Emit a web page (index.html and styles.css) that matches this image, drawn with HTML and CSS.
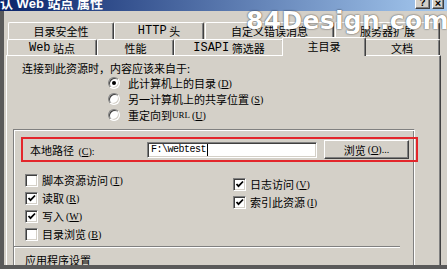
FILE: index.html
```html
<!DOCTYPE html>
<html lang="zh-CN">
<head>
<meta charset="utf-8">
<title>默认 Web 站点 属性</title>
<link rel="stylesheet" href="styles.css">
</head>
<body>
<div class="window">
  <div class="titlebar">
    <span class="title">默认 Web 站点 属性</span>
    <div class="tbtns">
      <span class="tbtn">?</span>
      <span class="tbtn x">×</span>
    </div>
  </div>
  <div class="frame">
    <div class="tabrow row1">
      <div class="tab w1">目录安全性</div>
      <div class="tab w2"><span class="en">HTTP</span>&nbsp;头</div>
      <div class="tab w3">自定义错误消息</div>
      <div class="tab w4">服务器扩展</div>
    </div>
    <div class="tabrow row2">
      <div class="tab v1"><span class="en">Web</span>&nbsp;站点</div>
      <div class="tab v2">性能</div>
      <div class="tab v3"><span class="en">ISAPI</span>&nbsp;筛选器</div>
      <div class="tab v4 active">主目录</div>
      <div class="tab v5">文档</div>
    </div>
    <div class="panel">
      <div class="heading">连接到此资源时，内容应该来自于:</div>
      <div class="radios">
        <div class="opt"><span class="radio on"></span>此计算机上的目录 <span class="mn">(<u>D</u>)</span></div>
        <div class="opt"><span class="radio"></span>另一计算机上的共享位置 <span class="mn">(<u>S</u>)</span></div>
        <div class="opt"><span class="radio"></span>重定向到 <span class="mn url">URL</span> <span class="mn">(<u>U</u>)</span></div>
      </div>
      <div class="group">
        <div class="pathrow">
          <span class="label">本地路径 <span class="mn">(<u>C</u>):</span></span>
          <div class="field"><span class="val">F:\webtest</span><span class="caret"></span></div>
          <div class="btn">浏览 <span class="mn">(<u>O</u>)...</span></div>
        </div>
        <div class="checks">
          <div class="col left">
            <div class="chk"><span class="box"></span>脚本资源访问 <span class="mn">(<u>T</u>)</span></div>
            <div class="chk"><span class="box"><svg viewBox="0 0 9 9" width="9" height="9"><path d="M1.5 4 L3.5 6.2 L8 1.5" stroke="#000" stroke-width="1.8" fill="none"/></svg></span>读取 <span class="mn">(<u>R</u>)</span></div>
            <div class="chk"><span class="box"><svg viewBox="0 0 9 9" width="9" height="9"><path d="M1.5 4 L3.5 6.2 L8 1.5" stroke="#000" stroke-width="1.8" fill="none"/></svg></span>写入 <span class="mn">(<u>W</u>)</span></div>
            <div class="chk"><span class="box"></span>目录浏览 <span class="mn">(<u>B</u>)</span></div>
          </div>
          <div class="col right">
            <div class="chk"><span class="box"><svg viewBox="0 0 9 9" width="9" height="9"><path d="M1.5 4 L3.5 6.2 L8 1.5" stroke="#000" stroke-width="1.8" fill="none"/></svg></span>日志访问 <span class="mn">(<u>V</u>)</span></div>
            <div class="chk"><span class="box"><svg viewBox="0 0 9 9" width="9" height="9"><path d="M1.5 4 L3.5 6.2 L8 1.5" stroke="#000" stroke-width="1.8" fill="none"/></svg></span>索引此资源 <span class="mn">(<u>I</u>)</span></div>
          </div>
        </div>
        <div class="sep"></div>
        <div class="appset">应用程序设置</div>
      </div>
    </div>
  </div>
  <div class="watermark">84Design.com</div>
</div>
</body>
</html>
```

FILE: styles.css
```css
* { box-sizing: border-box; }
html, body { margin: 0; padding: 0; }
body {
  width: 447px; height: 269px; overflow: hidden;
  background: #d4d0c8;
  font-family: "Noto Sans CJK SC", sans-serif;
  font-size: 11px; color: #000;
}
.window { position: relative; width: 447px; height: 269px; display: flex; flex-direction: column; }

.titlebar {
  height: 11px; flex: none; display: flex; align-items: flex-start; overflow: hidden;
  background: linear-gradient(to right, #0a246a, #a6caf0);
}
.title {
  margin: -3px 0 0 -13px; color: #fff;
  font-family: "Liberation Sans", "Noto Sans CJK SC", sans-serif;
  font-weight: bold; font-size: 13px; line-height: 13px; white-space: nowrap;
}
.tbtns { margin: -4px 3px 0 auto; display: flex; gap: 2px; }
.tbtn {
  width: 15px; height: 13px; background: #d4d0c8;
  border: 1px solid; border-color: #fff #404040 #404040 #fff;
  box-shadow: inset -1px -1px 0 #808080;
  font: bold 10px/10px "Liberation Sans", sans-serif;
  display: flex; align-items: flex-end; justify-content: center;
}
.tbtn.x { width: 12px; font-size: 11px; }

.frame {
  flex: 1; min-height: 0; overflow: hidden;
  border-left: 4px solid #5a5a5a; border-bottom: 4px solid #5a5a5a;
  padding-top: 11px;
}
.tabrow { display: flex; }
.row1 { height: 17px; margin-left: 4px; }
.row2 { height: 16px; margin-left: 3px; }
.tab {
  flex: none; height: 100%;
  display: flex; align-items: center; justify-content: center;
  border-top: 1px solid #fff; border-left: 1px solid #fff; border-right: 1px solid #404040;
  box-shadow: inset -1px 0 0 #808080;
  border-radius: 2px 2px 0 0;
  white-space: nowrap; line-height: 14px; background: #d4d0c8;
}
.en { font-family: "Liberation Mono", monospace; font-size: 12px; }
.w1 { width: 106px; }
.w2 { width: 90px; }
.w3 { width: 129px; margin-left: 1px; }
.w4 { width: 105px; margin-left: 1px; }
.v1 { width: 90px; }
.v2 { width: 77px; }
.v3 { width: 110px; }
.v4 { width: 80px; }
.v5 { width: 76px; }
.tab.active {
  width: 84px; margin: -2px -2px 0; height: 19px; padding-bottom: 2px;
  position: relative; z-index: 1;
}

.panel {
  margin-left: 2px; width: 435px; height: 260px;
  border-top: 1px solid #fff; border-left: 1px solid #fff; border-right: 1px solid #404040;
  box-shadow: inset -1px 0 0 #808080;
}
.heading { margin: 5px 0 0 15px; line-height: 14px; white-space: nowrap; }
.radios { margin-left: 101px; }
.opt { height: 16px; display: flex; align-items: center; white-space: nowrap; }
.radio {
  width: 12px; height: 12px; border-radius: 50%; background: #fff; flex: none;
  border: 1px solid; border-color: #808080 #fff #fff #808080;
  box-shadow: inset 1px 1px 0 #404040, inset -1px -1px 0 #d4d0c8;
  margin-right: 8px; display: flex; align-items: center; justify-content: center;
}
.radio.on::after { content: ""; width: 4px; height: 4px; border-radius: 50%; background: #000; }
.mn { font-family: "Liberation Serif", serif; font-size: 10px; margin-left: 2px; }
.mn.url { font-size: 9px; margin-left: 0; }

.group {
  margin: 6px 0 0 6px; width: 402px; height: 200px;
  border-top: 1px solid #808080; border-left: 1px solid #808080; border-right: 1px solid #fff;
  box-shadow: inset 1px 1px 0 #fff, inset -1px 0 0 #808080;
}
.pathrow {
  margin: 7px 0 0 7px; width: 397px; height: 25px;
  border: 2px solid #e3262b;
  display: flex; align-items: center; padding-left: 7px;
}
.label { width: 117px; flex: none; white-space: nowrap; }
.field {
  width: 170px; height: 16px; flex: none; background: #fff;
  border: 1px solid; border-color: #808080 #fff #fff #808080;
  box-shadow: inset 1px 1px 0 #404040, inset -1px -1px 0 #d4d0c8;
  display: flex; align-items: center; padding-left: 3px;
}
.val { font-family: "Liberation Mono", monospace; font-size: 10px; letter-spacing: -0.5px; line-height: 12px; }
.caret { width: 1px; height: 12px; background: #000; margin-left: 1px; }
.btn {
  width: 85px; height: 19px; margin-left: 7px; flex: none;
  border: 1px solid; border-color: #fff #404040 #404040 #fff;
  box-shadow: inset -1px -1px 0 #808080;
  display: flex; align-items: center; justify-content: center; white-space: nowrap;
}

.checks { margin-top: 9px; display: flex; }
.col.left { margin-left: 11px; width: 208px; }
.col.right { padding-top: 4px; }
.chk { height: 18px; display: flex; align-items: center; white-space: nowrap; }
.box {
  width: 13px; height: 13px; flex: none; background: #fff; margin-right: 4px;
  border: 1px solid; border-color: #808080 #fff #fff #808080;
  box-shadow: inset 1px 1px 0 #404040, inset -1px -1px 0 #d4d0c8;
  display: flex; align-items: center; justify-content: center;
}
.box svg { display: block; }
.sep { margin-top: 3px; width: 386px; height: 2px; border-top: 1px solid #808080; border-bottom: 1px solid #fff; }
.appset { margin: 5px 0 0 11px; line-height: 14px; }

.watermark {
  position: absolute; left: 246px; top: 8px;
  font-family: "DejaVu Sans", sans-serif; font-weight: bold; font-size: 25px; line-height: 25px;
  letter-spacing: 0.3px;
  color: #fff;
  text-shadow: 0 0 2px rgba(0,0,0,0.6), 0 0 1px rgba(0,0,0,0.4);
  white-space: nowrap; z-index: 5;
}
```
